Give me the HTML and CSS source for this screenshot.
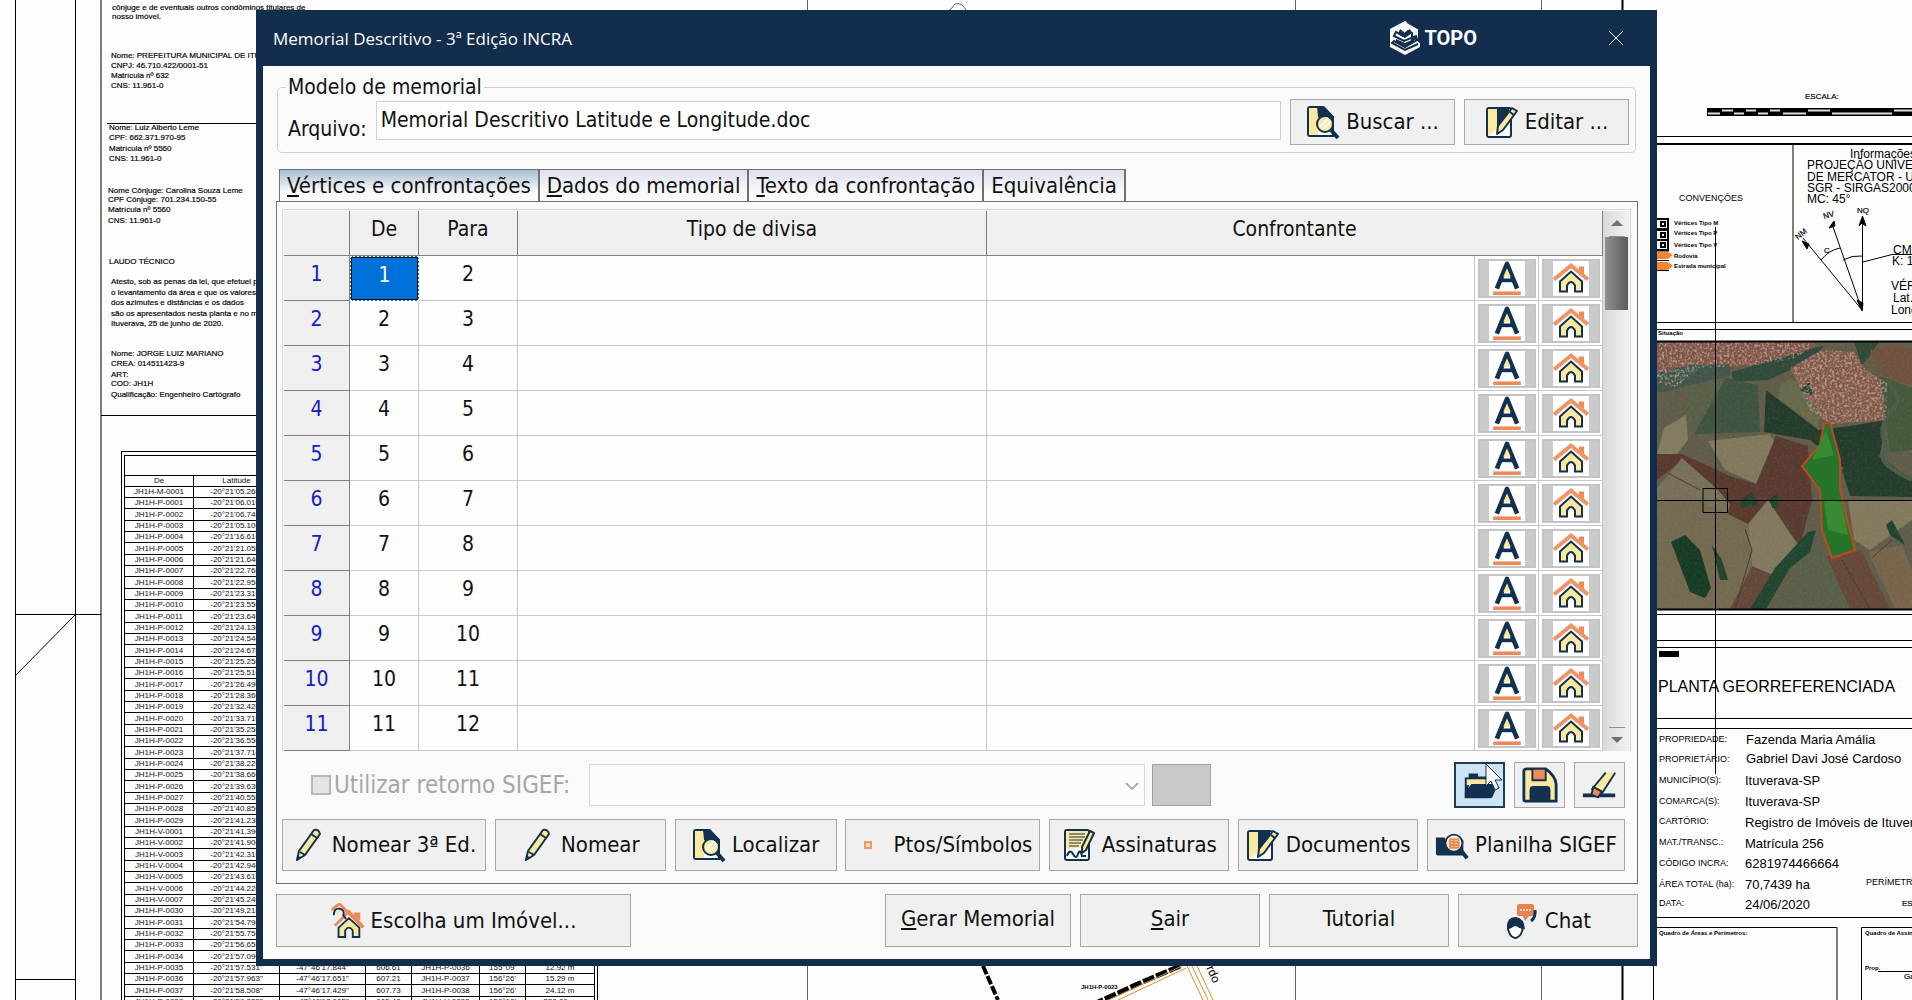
FILE: index.html
```html
<!DOCTYPE html>
<html lang="pt-BR">
<head>
	<meta charset="UTF-8">
	<title>Memorial Descritivo</title>
	<link rel="stylesheet" href="styles.css">
</head>
<body>

<!-- icons -->
<svg class="defs">
	<symbol id="i-doc-search" viewBox="0 0 34 34">
		<path d="M4 2H17L27 12V31H4Q2 31 2 29V4Q2 2 4 2Z" fill="#fff" stroke="#12304f" stroke-width="2"/>
		<path d="M3 3H12V30H3Z" fill="#fbe9a0"/>
		<path d="M11 1H18L28 12V20H22L12 12Z" fill="#12304f"/>
		<circle cx="19" cy="19" r="8" fill="#fbe9a0" stroke="#12304f" stroke-width="2"/>
		<path d="M14 22L22 13M17 24L25 16" stroke="#fff" stroke-width="2"/>
		<path d="M25 25L32 33" stroke="#12304f" stroke-width="4"/>
	</symbol>
	<symbol id="i-doc-edit" viewBox="0 0 34 34">
		<rect x="2" y="3" width="24" height="29" rx="2" fill="#fff" stroke="#12304f" stroke-width="2"/>
		<path d="M3 4H12V24L3 31Z" fill="#fbe9a0"/>
		<path d="M12 3H24V11L12 24Z" fill="#12304f"/>
		<path d="M27 3L32 6L18 25L12 29L13 21Z" fill="#fbe9a0" stroke="#12304f" stroke-width="2" stroke-linejoin="round"/>
		<path d="M25 7L29 10" stroke="#12304f" stroke-width="2"/>
	</symbol>
	<symbol id="i-pencil" viewBox="0 0 34 34">
		<path d="M22 2Q27 1 28 6L13 27L5 32L7 23Z" fill="#fbe9a0" stroke="#12304f" stroke-width="2" stroke-linejoin="round"/>
		<path d="M19 6L25 10M8 24L13 27" stroke="#12304f" stroke-width="2"/>
		<path d="M6 27L9 30L4 33Z" fill="#12304f"/>
	</symbol>
	<symbol id="i-point" viewBox="0 0 34 34">
		<rect x="11" y="14" width="6" height="6" fill="#fbe0b0" stroke="#ee9a70" stroke-width="2"/>
	</symbol>
	<symbol id="i-sign" viewBox="0 0 34 34">
		<rect x="3" y="2" width="24" height="30" rx="2" fill="#fff" stroke="#12304f" stroke-width="2"/>
		<path d="M4 3H26V18L4 22Z" fill="#fbe9a0"/>
		<path d="M7 6H23M7 9H23M7 12H21M7 15H19M7 18H17" stroke="#12304f"/>
		<path d="M5 28Q8 20 11 26T16 26T20 28H24" fill="none" stroke="#12304f" stroke-width="2"/>
		<path d="M28 3L32 5L24 22L20 25L20 19Z" fill="#fbe9a0" stroke="#12304f" stroke-width="2" stroke-linejoin="round"/>
	</symbol>
	<symbol id="i-folder-search" viewBox="0 0 36 34">
		<path d="M1 9H10L12 12H30V28H3Q1 28 1 26Z" fill="#12304f"/>
		<circle cx="20" cy="15" r="9" fill="#fff" stroke="#12304f" stroke-width="2"/>
		<circle cx="20" cy="15" r="7" fill="#fbe9a0"/>
		<path d="M16 11H25V20H16ZM16 14H25M16 17H25M20 11V20" fill="#fbd6a8" stroke="#ee8a5a" stroke-width="2"/>
		<path d="M27 22L34 31" stroke="#12304f" stroke-width="4"/>
	</symbol>
	<symbol id="i-open" viewBox="0 0 40 34">
		<path d="M4 31V9H8V5H18V8H31V13H10Z" fill="#12304f"/>
		<path d="M6 11H31V17H6Z" fill="#fbe9a0"/>
		<path d="M4 31V24L11 16H39L33 30Q32 31 31 31Z" fill="#12304f"/>
	</symbol>
	<symbol id="i-save" viewBox="0 0 40 38">
		<path d="M6 2H26Q36 9 37 18V36H5Q3 36 3 34V5Q3 2 6 2Z" fill="#fbe9a0" stroke="#12304f" stroke-width="3"/>
		<path d="M12 2H26V14H12Z" fill="#f28a55" stroke="#12304f" stroke-width="2"/>
		<path d="M9 36V24Q9 20 13 20H27Q31 20 31 24V36Z" fill="#12304f"/>
	</symbol>
	<symbol id="i-eraser" viewBox="0 0 40 34">
		<path d="M2 28H36" stroke="#12304f" stroke-width="4"/>
		<path d="M25 4H36L22 26L12 22Z" fill="#fbe9a0"/>
		<path d="M26 4L11 22M36 4L22 26" stroke="#12304f" stroke-width="2"/>
		<path d="M13 19L22 24L18 30L11 27Z" fill="#f28a55" stroke="#12304f" stroke-width="2"/>
	</symbol>
	<symbol id="i-house" viewBox="0 0 36 34">
		<path d="M26 5H31V14L26 10Z" fill="#ee8a5a"/>
		<path d="M1 18L18 4L35 18" fill="none" stroke="#ee9566" stroke-width="4"/>
		<path d="M7 20L18 10L29 20V30H22V24Q18 17 14 24V30H7Z" fill="#fbe9a0" stroke="#12304f" stroke-width="2"/>
	</symbol>
	<symbol id="i-house-key" viewBox="0 0 36 38">
		<path d="M1 8Q1 6 9 1L34 26" fill="none" stroke="#ee8a5a" stroke-width="3"/>
		<path d="M4 24L12 16L19 9L34 25" fill="none" stroke="#ee8a5a" stroke-width="3"/>
		<path d="M24 10H31V19L24 14Z" fill="#ee8a5a"/>
		<path d="M3 13Q3 5 9 6Q15 7 13 13L16 17" fill="none" stroke="#12304f" stroke-width="2"/>
		<path d="M6 13Q6 9 9 9" fill="none" stroke="#fbe9a0" stroke-width="2"/>
		<path d="M8 26L19 16L30 26V36H23V29Q19 23 15 29V36H8Z" fill="#fbe9a0" stroke="#12304f" stroke-width="2"/>
	</symbol>
	<symbol id="i-chat" viewBox="0 0 34 36">
		<path d="M14 1H27Q29 1 29 3V11Q29 13 27 13H24L20 18L18 13H14Q12 13 12 11V3Q12 1 14 1Z" fill="#e8834f"/>
		<path d="M15 7H26" stroke="#fbd6c0" stroke-width="2" stroke-dasharray="2 1"/>
		<path d="M30 7Q31 14 26 18" fill="none" stroke="#12304f" stroke-width="3"/>
		<path d="M4 23Q2 25 4 29Q6 35 11 35Q17 33 18 24L12 22Z" fill="#fff" stroke="#12304f" stroke-width="2"/>
		<path d="M2 26Q1 14 11 14Q19 15 20 26H18Q12 25 10 21Q8 26 2 26Z" fill="#12304f"/>
	</symbol>
	<symbol id="i-font" viewBox="0 0 36 38">
		<path d="M7 30L18 3L29 30" fill="none" stroke="#12304f" stroke-width="5" stroke-linejoin="round"/>
		<path d="M14 17H22L18 8Z" fill="#fbe9a0"/>
		<path d="M11 21H25" stroke="#12304f" stroke-width="4"/>
		<path d="M3 35H33" stroke="#ee8a5a" stroke-width="4"/>
	</symbol>
</svg>

<!-- drawing under the dialog -->
<div class="canvas">
	<svg class="plan" width="1912" height="1000">
		<g stroke="#000" fill="none">
			<path d="M15.5 0V1000M75.5 0V1000M101 0V1000" />
			<path d="M15 614.5H101M75 615L16 675M15 979.5H75M107 123.5H256M101 415.5H256"/>
			<path d="M121.5 1000V451.5H597.5V1000"/>
			<path d="M807.5 0V1000M1295.5 0V1000M1541.5 0V1000" stroke="#667"/>
			<path d="M1622.5 0V1000" stroke-width="2"/>
			<path d="M950 10L955 4Q962 2 966 10" stroke="#667"/>
			<path d="M983 966L998 1000" stroke-width="4" stroke-dasharray="9 2"/>
			<path d="M1180 966L1140 983L1096 1003" stroke-width="5" stroke-dasharray="12 2"/>
			<path d="M1186 968L1112 1003M1182 966L1106 1001M1187 966L1203 1000M1192 966L1208 1000M1197 966L1213 1000" stroke="#e08a30"/>
		</g>
		<g class="tiny">
			<text x="112" y="10">cônjuge e de eventuais outros condôminos titulares de</text>
			<text x="112" y="19">nosso imóvel.</text>
			<text x="111" y="58">Nome: PREFEITURA MUNICIPAL DE ITUVERAVA</text>
			<text x="111" y="68">CNPJ: 46.710.422/0001-51</text>
			<text x="111" y="78">Matrícula nº 632</text>
			<text x="111" y="88">CNS: 11.961-0</text>
			<text x="109" y="130">Nome: Luiz Alberto Leme</text>
			<text x="109" y="140">CPF: 662.371.970-95</text>
			<text x="109" y="151">Matrícula nº 5560</text>
			<text x="109" y="161">CNS: 11.961-0</text>
			<text x="108" y="193">Nome Cônjuge: Carolina Souza Leme</text>
			<text x="108" y="202">CPF Cônjuge: 701.234.150-55</text>
			<text x="108" y="212">Matrícula nº 5560</text>
			<text x="108" y="223">CNS: 11.961-0</text>
			<text x="109" y="264">LAUDO TÉCNICO</text>
			<text x="111" y="284">Atesto, sob as penas da lei, que efetuei pessoalmente</text>
			<text x="111" y="295">o levantamento da área e que os valores corretos</text>
			<text x="111" y="305">dos azimutes e distâncias e os dados</text>
			<text x="111" y="316">são os apresentados nesta planta e no memorial</text>
			<text x="111" y="326">Ituverava, 25 de junho de 2020.</text>
			<text x="111" y="356">Nome: JORGE LUIZ MARIANO</text>
			<text x="111" y="366">CREA: 014511423-9</text>
			<text x="111" y="377">ART:</text>
			<text x="111" y="386">COD: JH1H</text>
			<text x="111" y="397">Qualificação: Engenheiro Cartógrafo</text>
			<text x="409" y="15">Nome: Gabriel Davi José Cardoso</text>
		</g>
		<text class="micro" x="1081" y="989">JH1H-P-0023</text>
		<text class="note" transform="translate(1206 968) rotate(65)">rdo</text>
	</svg>

	<table class="coords">
		<colgroup>
			<col class="w-code"><col class="w-lat"><col class="w-lat"><col class="w-alt"><col class="w-para"><col class="w-alt"><col class="w-code">
		</colgroup>
		<thead>
			<tr class="caption"><th colspan="7"></th></tr>
			<tr><th>De</th><th>Latitude</th><th>Longitude</th><th>Alt.</th><th>Para</th><th>Azimute</th><th>Distância</th></tr>
		</thead>
		<tbody id="coords"></tbody>
	</table>

	<svg class="plan-right" width="262" height="1000" viewBox="1650 0 262 1000">
		<g fill="none" stroke="#000">
			<path d="M1650 136.5H1912M1793 143V322M1650 322.5H1912M1650 329.5H1912M1650 614.5H1912M1650 640.5H1912M1650 647.5H1912M1650 718.5H1912M1650 728.5H1912M1650 917.5H1912"/>
			<path d="M1653.5 1000V927.5H1837V1000M1861.5 1000V927.5H1912M1878 971.5H1912M1646.5 960V1000" />
			<path d="M1650 144H1912" stroke-width="2"/>
			<path d="M1862.5 310V216M1862 310L1803 238M1862 310L1832 224M1821 260Q1829 250 1840 248M1843 260Q1852 255 1862 256M1863 262L1892 254.500H1912"/>
			<path d="M1859 226L1862.500 216L1866 226L1862 223ZM1829 228L1835 226L1834 221ZM1802 241L1807 249L1809 244Z" fill="#000"/>
			<path d="M1862 311L1857 300L1863 303Z" fill="#000"/>
		</g>
		<rect x="1707" y="108" width="205" height="8"/>
		<path d="M1708 113.500H1720M1722 110.500H1733M1734 113.500H1744M1746 110.500H1756M1758 113.500H1768M1770 110.500H1780M1783 113.500H1806M1808 110.500H1830M1832 113.500H1892M1894 110.500H1912" stroke="#ddd" stroke-width="2"/>
		<g fill="#fff" stroke="#000" stroke-width="2">
			<rect x="1652" y="219" width="16" height="10"/><rect x="1652" y="230" width="16" height="10"/><rect x="1652" y="240" width="16" height="10"/>
			<path d="M1661 222H1665V226H1661ZM1661 233H1665V237H1661ZM1661 243H1665V247H1661Z"/>
		</g>
		<path d="M1650 252H1668L1673 255L1668 259H1650ZM1650 262H1668L1673 266L1668 270H1650Z" fill="#f5842e"/>
		<path d="M1657 251H1669M1657 260.500H1669M1657 270.500H1669" stroke="#000"/>
		<g class="tiny">
			<text x="1805" y="99">ESCALA:</text>
			<text x="1857" y="213">NQ</text>
			<text x="1824" y="219" transform="rotate(-15 1824 219)">NV</text>
			<text x="1798" y="240" transform="rotate(-40 1798 240)">NM</text>
			<text x="1824" y="253">C</text>
			<text x="1902" y="906">ESC</text>
			<text x="1904" y="979">Gab</text>
		</g>
		<g class="micro">
			<text x="1674" y="225">Vértices Tipo M</text>
			<text x="1674" y="235">Vértices Tipo P</text>
			<text x="1674" y="247">Vértices Tipo V</text>
			<text x="1674" y="258">Rodovia</text>
			<text x="1674" y="268">Estrada municipal</text>
			<text x="1658" y="335">Situação</text>
			<text x="1659" y="935">Quadro de Áreas e Perímetros:</text>
			<text x="1865" y="935">Quadro de Assinaturas</text>
			<text x="1865" y="970">Prop.</text>
		</g>
		<g class="label">
			<text x="1679" y="201">CONVENÇÕES</text>
			<text x="1659" y="742">PROPRIEDADE:</text>
			<text x="1659" y="762">PROPRIETÁRIO:</text>
			<text x="1659" y="783">MUNICÍPIO(S):</text>
			<text x="1659" y="804">COMARCA(S):</text>
			<text x="1659" y="824">CARTÓRIO:</text>
			<text x="1659" y="845">MAT./TRANSC.:</text>
			<text x="1659" y="866">CÓDIGO INCRA:</text>
			<text x="1659" y="887">ÁREA TOTAL (ha):</text>
			<text x="1659" y="906">DATA:</text>
			<text x="1866" y="885">PERÍMETRO</text>
		</g>
		<g class="note">
			<text x="1850" y="158">Informações</text>
			<text x="1807" y="169">PROJEÇÃO UNIVERSAL</text>
			<text x="1807" y="181">DE MERCATOR - UTM</text>
			<text x="1807" y="192">SGR - SIRGAS2000</text>
			<text x="1807" y="203">MC: 45°</text>
			<text x="1893" y="254">CM:</text>
			<text x="1892" y="265">K: 1.</text>
			<text x="1891" y="290">VÉRT</text>
			<text x="1893" y="302">Lat.:</text>
			<text x="1891" y="314">Long</text>
		</g>
		<rect x="1659" y="651" width="20" height="6"/>
		<text class="headline" x="1658" y="692">PLANTA GEORREFERENCIADA</text>
		<g class="value">
			<text x="1746" y="744">Fazenda Maria Amália</text>
			<text x="1746" y="763">Gabriel Davi José Cardoso</text>
			<text x="1745" y="785">Ituverava-SP</text>
			<text x="1745" y="806">Ituverava-SP</text>
			<text x="1745" y="827">Registro de Imóveis de Ituverava</text>
			<text x="1745" y="848">Matrícula 256</text>
			<text x="1745" y="868">6281974466664</text>
			<text x="1745" y="889">70,7439 ha</text>
			<text x="1745" y="909">24/06/2020</text>
		</g>

		<!-- satellite photo -->
		<filter id="grain" x="0" y="0" width="100%" height="100%">
			<feTurbulence type="fractalNoise" baseFrequency="0.4" numOctaves="3" seed="4"/>
			<feColorMatrix values="0 0 0 0 .85  0 0 0 0 .65  0 0 0 0 .55  3 0 0 0 -1.3"/>
			<feComposite in2="SourceGraphic" operator="in"/>
		</filter>
		<rect x="1650" y="341" width="262" height="268" fill="#5f5c49"/>
		<path d="M1650 341H1820L1796 358L1760 365L1700 368L1676 388L1650 380Z" fill="#7c5546"/>
		<path d="M1650 374L1690 365L1730 364L1730 376L1686 386L1665 392L1650 392Z" fill="#43554a"/>
		<path d="M1732 372L1790 355L1825 345L1808 362L1768 380L1732 382Z" fill="#2f4a3c"/>
		<path d="M1690 385L1734 378L1716 405L1694 433H1682Z" fill="#596048"/>
		<path d="M1726 378L1758 385L1760 432L1694 434L1712 402Z" fill="#3d5440"/>
		<path d="M1766 390L1818 430L1850 426L1886 420L1880 455L1846 470L1810 440L1764 432Z" fill="#233b2b"/>
		<path d="M1790 368L1822 350L1854 352L1866 370L1888 384L1886 420L1830 424L1810 410L1796 380Z" fill="#80594a"/>
		<path d="M1780 385L1792 378L1820 412L1818 428L1778 398Z" fill="#67694d"/>
		<path d="M1854 341H1880L1862 366Z" fill="#2f4a35"/>
		<path d="M1870 350L1900 344L1912 350V385L1880 374Z" fill="#70503e"/>
		<path d="M1880 376L1912 388V450L1890 452Z" fill="#45583c"/>
		<path d="M1842 470L1870 450L1912 480V497L1850 496Z" fill="#243d2c"/>
		<path d="M1664 428L1686 415L1688 440L1676 455L1657 454Z" fill="#817b61"/>
		<path d="M1657 454H1682L1730 476L1756 484L1780 500L1760 530L1740 526L1716 500L1680 462L1657 480Z" fill="#59382e"/>
		<path d="M1708 441L1770 434L1782 455L1757 484L1725 470Z" fill="#80785c"/>
		<path d="M1776 436L1808 446L1812 500L1800 545L1757 502L1756 484Z" fill="#583a30"/>
		<path d="M1682 458L1716 488L1730 504L1720 545L1657 500V488Z" fill="#76705a"/>
		<path d="M1657 502L1700 500L1748 524L1752 575L1735 609H1657Z" fill="#726950"/>
		<path d="M1768 500L1798 545L1772 575L1752 566L1748 524Z" fill="#81785f"/>
		<path d="M1752 566L1775 576L1750 609H1730Z" fill="#63483a"/>
		<path d="M1816 545L1836 560L1855 609H1772Z" fill="#596049"/>
		<path d="M1826 556L1862 551L1890 609H1850Z" fill="#66483b"/>
		<path d="M1848 500H1912V520L1870 550L1854 540Z" fill="#83795d"/>
		<path d="M1868 552L1902 545L1912 570V609H1895Z" fill="#76654b"/>
		<path d="M1671 542L1685 535L1700 550L1711 588L1705 598L1690 592Z" fill="#183b25"/>
		<path d="M1712 545L1722 560L1728 580L1720 580Z" fill="#21432c"/>
		<path d="M1808 532L1816 530L1810 552L1790 568L1766 609H1750L1775 568Z" fill="#1f4630"/>
		<path d="M1884 380Q1908 398 1890 412Q1876 430 1888 450Q1870 460 1912 480" fill="none" stroke="#4b5c48" stroke-width="4"/>
		<path d="M1800 390L1810 382L1813 396ZM1740 500L1752 492L1758 504L1742 508ZM1886 525L1892 520L1905 545L1890 535ZM1770 498L1778 494V508L1772 508Z" fill="#1f4630"/>
		<path d="M1745 529L1752 550L1735 609M1842 560L1870 609M1662 470L1700 490M1872 558L1892 540" fill="none" stroke="#4a3a30"/>
		<path d="M1650 341H1820L1796 358L1760 365L1700 368L1676 388L1650 380ZM1790 368L1822 350L1854 352L1866 370L1888 384L1886 420L1830 424L1810 410Z" fill="#000" filter="url(#grain)" opacity=".5"/>
		<rect x="1650" y="341" width="262" height="268" filter="url(#grain)" opacity=".06"/>
		<path d="M1824 424L1830 422L1840 460L1840 488L1847 520L1855 550L1832 558L1822 530L1820 490L1802 466L1820 445Z" fill="#24742a" stroke="#c3481f" stroke-width="2"/>
		<path d="M1826 430L1834 455L1812 460ZM1824 500L1842 502L1848 535L1828 530Z" fill="#3a8a32"/>
		<path d="M1650 341.500H1912M1650 609.500H1912" stroke="#000" stroke-width="2"/>

		<!-- crosshair -->
		<path d="M1715.500 227V774M1650 500.500H1912M1703 488.500H1727.500V512.500H1703Z" fill="none" stroke="#000"/>
	</svg>
</div>

<div class="dialog">
	<div class="titlebar">
		<span class="title">Memorial Descritivo - 3ª Edição INCRA</span>
		<span class="brand">
			<svg width="34" height="36" viewBox="0 0 34 36">
				<path d="M17 1L32 9V27L17 35L2 27V9Z" fill="#fff"/>
				<path d="M19 2L31 9V21L28 18L24 20V13L20 11L15 16L8 12L6 16L16 21L28 16L29 20L17 27L6 21L4 23L17 30L30 24" fill="none" stroke="#132d4c" stroke-width="2"/>
				<path d="M12 9L17 13L22 9L24 13L17 18L10 14ZM8 19L17 23L26 19V22L17 26L8 22Z" fill="#132d4c"/>
			</svg>
			TOPO
		</span>
		<button class="close" aria-label="Fechar">
			<svg width="16" height="16" viewBox="0 0 16 16"><path d="M1 1L15 15M15 1L1 15" stroke="#fff"/></svg>
		</button>
	</div>

	<div class="content">
		<fieldset class="model">
			<legend>Modelo de memorial</legend>
			<div class="model-row">
				<label for="file">Arquivo:</label>
				<input type="text" id="file" value="Memorial Descritivo Latitude e Longitude.doc">
				<button class="btn"><svg class="icon"><use href="#i-doc-search"/></svg>Buscar ...</button>
				<button class="btn"><svg class="icon"><use href="#i-doc-edit"/></svg>Editar ...</button>
			</div>
		</fieldset>

		<div class="tabs">
			<button class="tab selected"><u>V</u>értices e confrontações</button>
			<button class="tab"><u>D</u>ados do memorial</button>
			<button class="tab"><u>T</u>exto da confrontação</button>
			<button class="tab">Equivalência</button>
		</div>

		<div class="panel">
			<div class="grid-wrap">
				<table class="grid">
					<colgroup>
						<col class="c-num"><col class="c-de"><col class="c-para"><col class="c-tipo"><col><col class="c-act"><col class="c-act">
					</colgroup>
					<thead>
						<tr><th></th><th>De</th><th>Para</th><th>Tipo de divisa</th><th colspan="3">Confrontante</th></tr>
					</thead>
					<tbody id="rows"></tbody>
				</table>
				<div class="scrollbar">
					<span class="up"></span>
					<span class="thumb"></span>
					<span class="down"></span>
				</div>
			</div>

			<div class="sigef">
				<input type="checkbox" id="sigef" disabled>
				<label for="sigef">Utilizar retorno SIGEF:</label>
				<div class="combo">
					<select aria-label="Retorno SIGEF" disabled><option></option></select>
					<svg width="14" height="8" viewBox="0 0 14 8"><path d="M1 1L7 7L13 1" fill="none" stroke="#b0b0b0" stroke-width="2"/></svg>
				</div>
				<button class="swatch" aria-label="Retorno" disabled></button>
				<div class="files">
					<button class="btn-icon active" aria-label="Abrir"><svg><use href="#i-open"/></svg></button>
					<button class="btn-icon" aria-label="Salvar"><svg><use href="#i-save"/></svg></button>
					<button class="btn-icon" aria-label="Limpar"><svg><use href="#i-eraser"/></svg></button>
					<svg class="cursor" width="18" height="28" viewBox="0 0 18 28"><path d="M1 1V23L6 18L10 27L14 25L10 17H17Z" fill="#fff" stroke="#12304f"/></svg>
				</div>
			</div>

			<div class="tools">
				<button class="btn w-nomear3"><svg class="icon"><use href="#i-pencil"/></svg>Nomear 3ª Ed.</button>
				<button class="btn w-nomear"><svg class="icon"><use href="#i-pencil"/></svg>Nomear</button>
				<button class="btn w-loc"><svg class="icon"><use href="#i-doc-search"/></svg>Localizar</button>
				<button class="btn w-ptos"><svg class="icon"><use href="#i-point"/></svg>Ptos/Símbolos</button>
				<button class="btn w-doc"><svg class="icon"><use href="#i-sign"/></svg>Assinaturas</button>
				<button class="btn w-doc"><svg class="icon"><use href="#i-doc-edit"/></svg>Documentos</button>
				<button class="btn w-plan"><svg class="icon"><use href="#i-folder-search"/></svg>Planilha SIGEF</button>
			</div>
		</div>

		<div class="footer">
			<button class="btn estate"><svg class="icon"><use href="#i-house-key"/></svg>Escolha um Imóvel...</button>
			<button class="btn gerar"><span><u>G</u>erar Memorial</span></button>
			<button class="btn"><span><u>S</u>air</span></button>
			<button class="btn"><span>Tutorial</span></button>
			<button class="btn"><svg class="icon"><use href="#i-chat"/></svg>Chat</button>
		</div>
	</div>
</div>

<script>
	// grid rows
	let html = "";
	for(let i = 1; i <= 11; i++) {
		html += `<tr>
			<th>${i}</th>
			<td class="${i === 1 ? "current" : ""}">${i}</td>
			<td>${i + 1}</td>
			<td></td>
			<td></td>
			<td class="act"><button aria-label="Texto ${i}"><svg><use href="#i-font"/></svg></button></td>
			<td class="act"><button aria-label="Imóvel ${i}"><svg><use href="#i-house"/></svg></button></td>
		</tr>`;
	}
	document.getElementById("rows").innerHTML = html;

	// coordinates table of the plan
	const lat = ["05.260", "06.010", "06.740", "05.100", "16.610", "21.050", "21.640", "22.760", "22.950", "23.310", "23.550", "23.640",
		"24.130", "24.540", "24.670", "25.250", "25.510", "26.490", "28.360", "32.420", "33.710", "35.250", "36.550", "37.710", "38.220",
		"38.660", "39.630", "40.550", "40.850", "41.230", "41.390", "41.900", "42.310", "42.940", "43.610", "44.220", "45.240", "49.210",
		"54.790", "55.750", "56.650", "57.090", "57.531", "57.963", "58.508", "59.335"];
	const last = {
		42: ["-47°46'17.844\"", "606.61", "JH1H-P-0036", "155°09'", "12.92 m"],
		43: ["-47°46'17.651\"", "607.21", "JH1H-P-0037", "156°26'", "15.29 m"],
		44: ["-47°46'17.429\"", "607.73", "JH1H-P-0038", "156°26'", "24.12 m"],
		45: ["-47°46'17.005\"", "605.40", "JH1H-V-0003", "156°10'", "220.66 m"]
	};
	function code(i) {
		let pad = n => String(n).padStart(4, "0");
		if(i === 0) return "JH1H-M-0001";
		if(i < 30) return "JH1H-P-" + pad(i);
		if(i < 37) return "JH1H-V-" + pad(i - 29);
		return "JH1H-P-" + pad(i - 7);
	}
	document.getElementById("coords").innerHTML = lat.map((v, i) => {
		let rest = last[i] || ["", "", "", "", ""];
		return `<tr><td>${code(i)}</td><td>-20°21'${v}"</td>${rest.map(c => `<td>${c}</td>`).join("")}</tr>`;
	}).join("");
</script>
</body>
</html>
```

FILE: styles.css
```css
* {
	margin: 0;
	padding: 0;
	box-sizing: border-box;
}

body {
	height: 100vh;
	overflow: hidden;
	position: relative;
	background: #fefefe;
	color: #111;
	font: 21px/24px "DejaVu Sans Condensed", "Noto Sans", sans-serif;
}

button, input, select {
	font: inherit;
	color: inherit;
}

.defs {
	position: absolute;
	width: 0;
	height: 0;
}

/* drawing */
.canvas {
	position: absolute;
	top: 0;
	right: 0;
	bottom: 0;
	left: 0;
	overflow: hidden;
	font-family: "Liberation Sans", Arial, sans-serif;
}

.plan {
	display: block;
}

.plan-right {
	position: absolute;
	top: 0;
	right: 0;
	background: #fefefe;
}

.tiny {
	font-size: 8px;
	stroke: #111;
	stroke-width: .2px;
}

.micro {
	font-size: 6px;
	font-weight: bold;
}

.label {
	font-size: 9px;
}

.note {
	font-size: 12px;
}

.value {
	font-size: 13px;
}

.headline {
	font-size: 16px;
}

.coords {
	position: absolute;
	left: 124px;
	top: 455px;
	width: 471px;
	table-layout: fixed;
	border-collapse: collapse;
	font-size: 8px;
	line-height: 10px;
}

.coords .w-code {
	width: 69px;
}

.coords .w-lat {
	width: 86px;
}

.coords .w-alt {
	width: 46px;
}

.coords .w-para {
	width: 68px;
}

.coords th,
.coords td {
	height: 11px;
	border: 1px solid #000;
	text-align: center;
	font-weight: normal;
	white-space: nowrap;
}

.coords tbody tr:nth-child(3n) td {
	height: 12px;
}

.coords .caption th {
	height: 20px;
}

/* dialog */
.dialog {
	position: absolute;
	top: 10px;
	left: 256px;
	right: 255px;
	padding: 0 7px 7px;
	background: #132d4c;
}

.titlebar {
	display: flex;
	align-items: center;
	height: 56px;
	padding: 0 24px 0 10px;
	color: #fff;
}

.title {
	flex: 1;
	padding-top: 2px;
	font: 17px/24px "Open Sans", "Noto Sans", sans-serif;
}

.brand {
	display: flex;
	align-items: center;
	gap: 2px;
	margin-right: 129px;
	font: bold 20px/24px Roboto, sans-serif;
}

.close {
	display: flex;
	padding: 2px;
	border: 0;
	background: none;
}

.content {
	padding: 9px 12px 12px 13px;
	background: #fafafb;
}

.model {
	margin: 0 2px 0 1px;
	padding: 0 6px 7px 8px;
	border: 1px solid #d0d0d0;
	border-radius: 5px;
}

.model legend {
	padding: 0 2px;
	line-height: 24px;
}

.model-row {
	display: flex;
	gap: 9px;
}

.model-row label {
	padding: 18px 0 0 2px;
}

.model-row input {
	flex: 1;
	height: 39px;
	margin-top: 2px;
	padding: 0 4px 2px;
	border: 1px solid #d0d0d0;
	background: #fefefe;
}

.btn {
	display: flex;
	align-items: center;
	justify-content: center;
	gap: 6px;
	border: 1px solid #a8a8a8;
	background: #f0f0f0;
	font-size: 22px;
	white-space: nowrap;
}

.icon {
	flex: none;
	width: 34px;
	height: 36px;
}

.model-row .btn {
	width: 165px;
	height: 46px;
}

.tabs {
	display: flex;
	margin: 16px 0 0 3px;
}

.tab {
	height: 32px;
	padding: 0 7px;
	border: solid #707070;
	border-width: 1px 2px 0 0;
	background: linear-gradient(#dcdff0, #fafafb 70%);
	font-size: 22px;
}

.tab.selected {
	border-left-width: 1px;
	background: linear-gradient(#a9bdd2, #fafafb 70%);
}

.panel {
	padding: 7px 6px 12px 5px;
	border: 1px solid #70707a;
	background: #fafafb;
}

.grid-wrap {
	display: flex;
	padding: 1px 0 0 1px;
	border: solid #d4d4e4;
	border-width: 1px 1px 0;
}

.grid {
	flex: 1;
	table-layout: fixed;
	border-spacing: 0;
	background: #fefefe;
}

.c-num {
	width: 66px;
}

.c-de {
	width: 69px;
}

.c-para {
	width: 99px;
}

.c-tipo {
	width: 469px;
}

.c-act {
	width: 64px;
}

.grid th,
.grid td {
	height: 45px;
	padding-bottom: 8px;
	border: solid #c8c8c8;
	border-width: 0 1px 1px 0;
	text-align: center;
	font-weight: normal;
}

.grid th {
	border-color: #808080;
	background: #f0f0f0;
}

.grid tbody th {
	color: #1420c8;
}

.grid .current {
	border: 2px dotted #fff;
	outline: 1px solid #111;
	outline-offset: -2px;
	background: #0070d8;
	color: #fff;
}

.grid .act {
	padding: 3px 2px 2px 3px;
}

.act button {
	display: flex;
	justify-content: center;
	width: 100%;
	height: 39px;
	border: 2px solid #c4c4c4;
	background: #cacaca;
}

.act svg {
	width: 36px;
	height: 35px;
	background: #fff;
}

.scrollbar {
	display: flex;
	flex-direction: column;
	align-items: center;
	width: 27px;
	background: linear-gradient(90deg, #d8d9d8, #f2f2f2);
}

.scrollbar .up {
	width: 16px;
	height: 26px;
	border-bottom: 1px solid #909090;
}

.scrollbar .up::before,
.scrollbar .down::before {
	content: "";
	display: block;
	width: 0;
	margin: 9px auto;
	border: solid transparent;
	border-width: 0 6px 6px;
	border-bottom-color: #707070;
}

.scrollbar .thumb {
	flex: 1;
	width: 23px;
	max-height: 73px;
	background: linear-gradient(90deg, #909090, #5a5a5a);
}

.scrollbar .down {
	width: 16px;
	height: 24px;
	margin-top: auto;
	border-top: 1px solid #909090;
}

.scrollbar .down::before {
	border-width: 6px 6px 0;
	border-color: #707070 transparent transparent;
}

.sigef {
	display: flex;
	align-items: center;
	height: 46px;
	margin: 11px 6px 11px 29px;
	color: #a6a6a6;
}

.sigef input {
	appearance: none;
	width: 20px;
	height: 20px;
	margin-right: 3px;
	border: 2px solid #b8b8b8;
	background: #e4e4e4;
}

.sigef label {
	width: 239px;
	margin-right: 16px;
	font-size: 24px;
	white-space: nowrap;
}

.combo {
	position: relative;
	width: 556px;
	height: 42px;
}

.combo select {
	appearance: none;
	width: 100%;
	height: 100%;
	border: 1px solid #ccc;
	background: #fefefe;
}

.combo svg {
	position: absolute;
	right: 6px;
	top: 18px;
}

.swatch {
	width: 59px;
	height: 42px;
	margin-left: 7px;
	border: 1px solid #a0a0a0;
	background: #c8c8c8;
}

.files {
	position: relative;
	display: flex;
	gap: 9px;
	margin-left: auto;
}

.btn-icon {
	display: flex;
	align-items: center;
	justify-content: center;
	width: 51px;
	height: 46px;
	border: 1px solid #a8a8a8;
	background: #f0f0f0;
}

.btn-icon.active {
	border: 2px solid #1e3c5c;
	background: #cce4f4;
}

.btn-icon svg {
	width: 38px;
	height: 38px;
}

.cursor {
	position: absolute;
	left: 31px;
	top: 1px;
}

.tools {
	display: flex;
	justify-content: space-between;
	margin-right: 6px;
}

.tools .btn {
	height: 52px;
}

.w-nomear3 {
	width: 204px;
}

.w-nomear {
	width: 171px;
}

.w-loc {
	width: 162px;
}

.w-ptos {
	width: 195px;
}

.w-doc {
	width: 180px;
}

.w-plan {
	width: 198px;
}

.footer {
	display: flex;
	gap: 9px;
	margin-top: 10px;
}

.footer .btn {
	width: 180px;
	height: 53px;
}

.footer .btn span {
	padding-bottom: 4px;
}

.footer .estate {
	width: 355px;
	margin-right: auto;
}

.footer .gerar {
	width: 186px;
}
```
